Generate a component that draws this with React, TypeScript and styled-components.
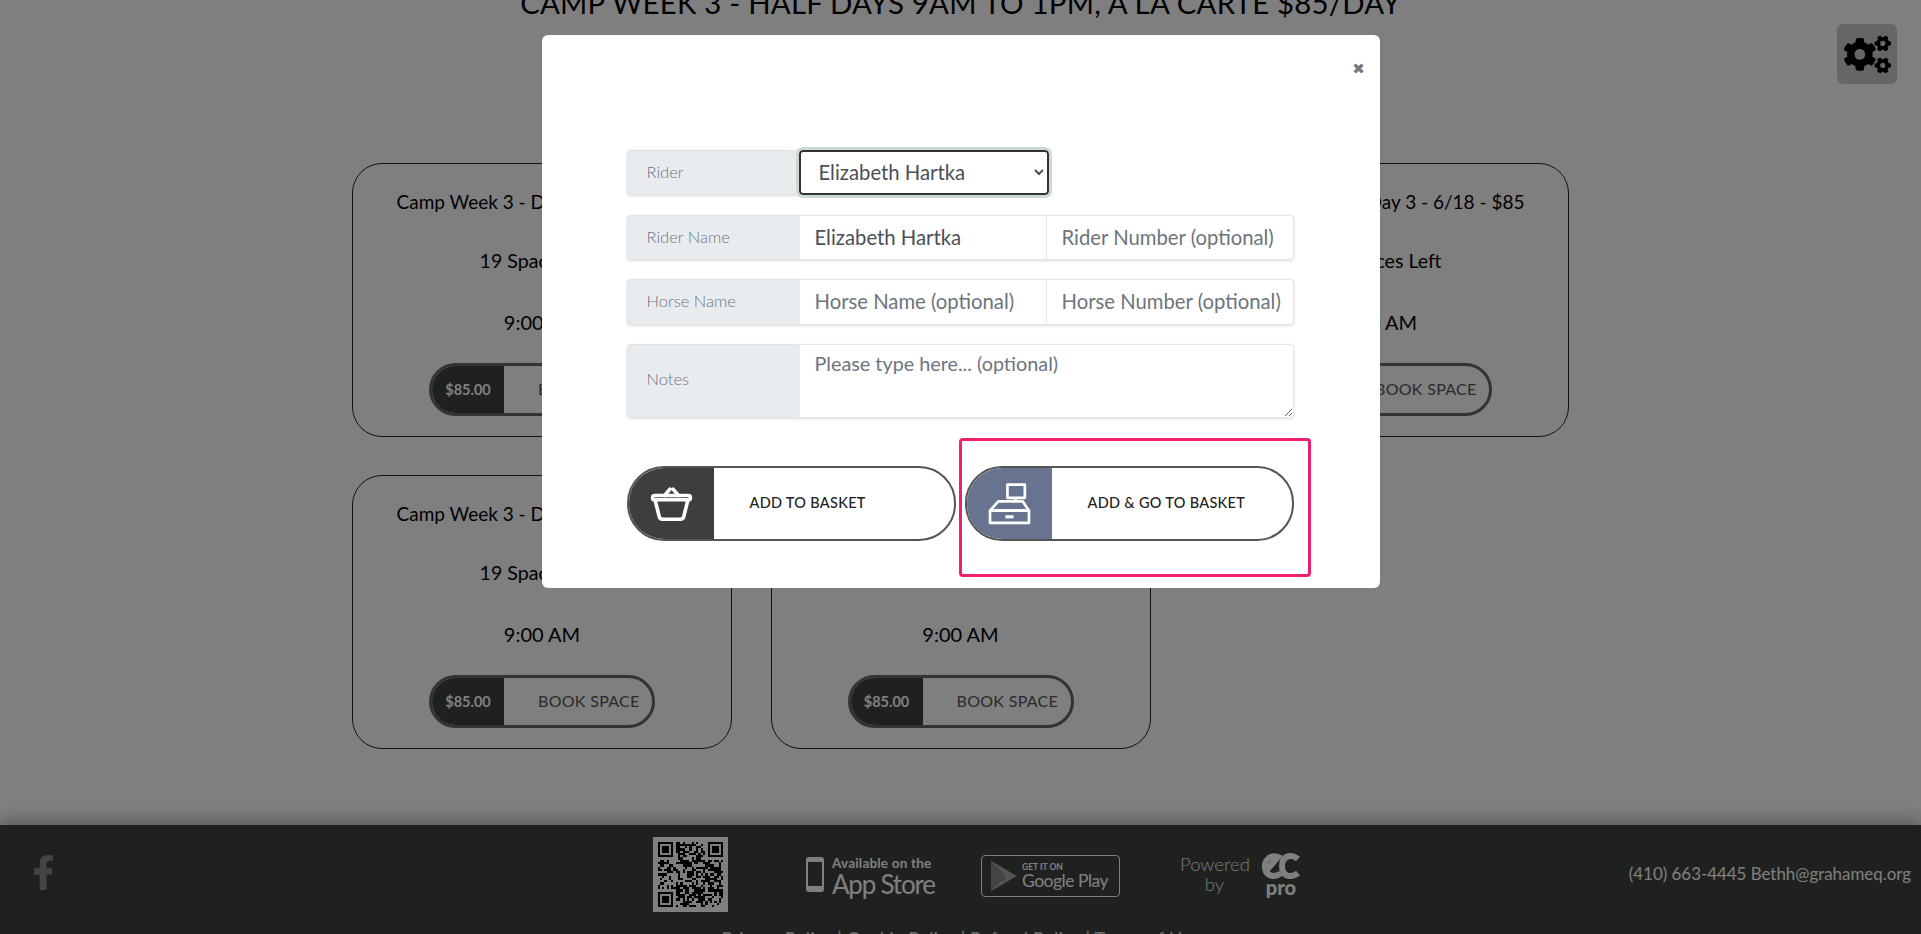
import React, { FC } from 'react'
import styled, { createGlobalStyle } from 'styled-components'
import { FaCogs, FaFacebookF } from 'react-icons/fa'

const GlobalStyle = createGlobalStyle`
  html, body {
    margin: 0;
    padding: 0;
    height: 100%;
    overflow: hidden;
    background: #fff;
    font-family: Lato, "Open Sans", Arial, sans-serif;
  }
  * {
    box-sizing: border-box;
  }
`

const Page = styled.div`
  position: relative;
  height: 934px;
  overflow: hidden;
  display: flex;
  flex-direction: column;
`

const Main = styled.main`
  flex: 1;
`

const Heading = styled.h1`
  margin: -12px 0 0;
  height: 175px;
  font-size: 29.4px;
  line-height: 30px;
  font-weight: 400;
  text-align: center;
  color: #000;
  text-transform: uppercase;
  letter-spacing: 0.2px;
  white-space: nowrap;
`

const CardGrid = styled.div`
  display: grid;
  grid-template-columns: repeat(3, 380px);
  gap: 38px 38.5px;
  justify-content: center;
`

const Card = styled.section`
  height: 274px;
  padding-top: 26px;
  border: 1px solid #222;
  border-radius: 30px;
  display: flex;
  flex-direction: column;
  align-items: center;
  color: #000;
`

const CardLine = styled.div<{ $gap: number; $size: number }>`
  margin-top: ${({ $gap }) => $gap}px;
  font-size: ${({ $size }) => $size}px;
  line-height: 24px;
`

const Pill = styled.div`
  margin-top: 29px;
  width: 226px;
  height: 53px;
  display: flex;
  border: 3px solid #666;
  border-radius: 27px;
  overflow: hidden;
`

const PillPrice = styled.div`
  width: 72px;
  padding-bottom: 1px;
  background: #3f4240;
  color: #fff;
  font-size: 14.5px;
  font-weight: 700;
  display: flex;
  align-items: center;
  justify-content: center;
`

const PillAction = styled.div`
  flex: 1;
  padding: 0 0 2px 34px;
  color: #555;
  font-size: 16px;
  letter-spacing: 0.3px;
  display: flex;
  align-items: center;
  white-space: nowrap;
`

const GearButton = styled.div`
  position: absolute;
  top: 24px;
  right: 24px;
  width: 60px;
  height: 60px;
  border-radius: 6px;
  background: #ccc;
  color: #000;
  display: flex;
  align-items: center;
  justify-content: center;
  font-size: 47px;
`

const Footer = styled.footer`
  flex: none;
  height: 109px;
  background: #3f4240;
  box-shadow: 0 -5px 16px rgba(0, 0, 0, 0.3);
  color: #fff;
`

const FooterRow = styled.div`
  height: 100px;
  display: grid;
  grid-template-columns: 653px auto 1fr;
  align-items: start;
`

const Social = styled.div`
  padding: 30px 0 0 26px;
  font-size: 35px;
  color: #888;
  line-height: 0;
`

const FooterBadges = styled.div`
  display: flex;
  align-items: flex-start;
  padding-top: 12px;
`

const QrBox = styled.svg`
  display: block;
  width: 75px;
  height: 75px;
`

const AppStore = styled.div`
  margin: 20px 0 0 78px;
  width: 128px;
  display: flex;
  gap: 8px;
`

const PhoneBox = styled.div`
  flex: none;
  line-height: 0;
`

const StoreText = styled.div`
  color: #fff;
  line-height: 1;
  white-space: nowrap;
`

const AppSmall = styled.div`
  font-size: 13.5px;
  font-weight: 700;
  letter-spacing: 0.2px;
`

const AppLarge = styled.div`
  font-size: 26px;
  letter-spacing: -1.2px;
`

const PlayBadge = styled.div`
  margin: 18px 0 0 47px;
  width: 139px;
  height: 42px;
  border: 1px solid #fff;
  border-radius: 4px;
  display: flex;
  align-items: center;
  gap: 4px;
  padding-left: 8px;
`

const PlaySmall = styled.div`
  font-size: 8.5px;
  font-weight: 700;
`

const PlayLarge = styled.div`
  font-size: 17.5px;
  margin-top: 1px;
  letter-spacing: -0.5px;
`

const Powered = styled.div`
  margin: 15px 0 0 60px;
  display: flex;
  align-items: center;
  gap: 12px;
`

const PoweredText = styled.div`
  width: 69px;
  text-align: center;
  font-size: 18.5px;
  line-height: 20px;
  font-weight: 300;
  color: #eee;
`

const EcLogo = styled.div`
  display: flex;
  flex-direction: column;
  align-items: center;
  width: 40px;
  color: #fff;
`

const ProText = styled.div`
  font-size: 20px;
  line-height: 15px;
  font-weight: 900;
`

const Contact = styled.div`
  padding: 38px 10px 0 0;
  text-align: right;
  font-size: 16.9px;
  line-height: 22px;
  white-space: nowrap;
`

const FooterLinks = styled.div`
  text-align: center;
  font-size: 18.5px;
  line-height: 18px;
  color: #ddd;
  margin-top: 5px;
`

const Overlay = styled.div`
  position: absolute;
  inset: 0;
  background: rgba(0, 0, 0, 0.5);
`

const Modal = styled.div`
  position: relative;
  width: 838px;
  height: 553px;
  margin: 35px auto 0;
  padding: 115px 86px 0 85px;
  background: #fff;
  border-radius: 6px;
`

const CloseMark = styled.span`
  position: absolute;
  top: 24px;
  right: 11px;
  width: 20px;
  text-align: center;
  font-family: "DejaVu Sans", sans-serif;
  font-size: 15px;
  line-height: 20px;
  color: #777;
`

const Form = styled.form`
  display: flex;
  flex-direction: column;
`

const InputGroup = styled.div<{ $height: number; $gap: number; $width?: number }>`
  display: flex;
  height: ${({ $height }) => $height}px;
  margin-bottom: ${({ $gap }) => $gap}px;
  width: ${({ $width }) => ($width ? `${$width}px` : '100%')};
  border-radius: 4px;
  box-shadow: 0 1px 3px rgba(0, 0, 0, 0.14);
`

const GroupLabel = styled.label<{ $lift?: number }>`
  flex: none;
  width: 172px;
  padding: 0 0 ${({ $lift }) => $lift ?? 2}px 19px;
  display: flex;
  align-items: center;
  background: #e9ecef;
  border: 1px solid #dfe3e6;
  border-right: none;
  border-radius: 4px 0 0 4px;
  color: #6c757d;
  font-size: 16.5px;
  font-weight: 300;
`

const TextInput = styled.input<{ $last?: boolean }>`
  flex: 1;
  min-width: 0;
  height: 100%;
  padding: 0 0 2px 15px;
  border: 1px solid #e4e6e8;
  border-left: ${({ $last }) => ($last ? 'none' : '1px solid #e4e6e8')};
  border-radius: ${({ $last }) => ($last ? '0 4px 4px 0' : '0')};
  outline: none;
  background: #fff;
  color: #495057;
  font-family: inherit;
  font-size: 20.3px;

  &::placeholder {
    color: #6c757d;
    opacity: 1;
  }
`

const RiderSelect = styled.select`
  flex: 1;
  height: 100%;
  padding: 0 0 2px 14px;
  border: 2px solid #333;
  border-radius: 4px;
  outline: 3px solid #ccdad4;
  background: #fff;
  color: #495057;
  font-family: inherit;
  font-size: 20.3px;
`

const NotesInput = styled.textarea`
  flex: 1;
  padding: 6px 15px;
  border: 1px solid #e4e6e8;
  border-radius: 0 4px 4px 0;
  outline: none;
  color: #495057;
  font-family: inherit;
  font-size: 19.8px;

  &::placeholder {
    color: #6c757d;
    opacity: 1;
  }
`

const ActionRow = styled.div`
  display: flex;
  gap: 9px;
  margin-top: 29px;
`

const BasketButton = styled.button`
  width: 329px;
  height: 75px;
  padding: 0;
  display: flex;
  background: #fff;
  border: 2px solid #555;
  border-radius: 37px;
  overflow: hidden;
  cursor: pointer;
  font-family: inherit;
`

const ButtonIcon = styled.span<{ $slate?: boolean }>`
  flex: none;
  width: 85px;
  height: 100%;
  display: flex;
  align-items: center;
  justify-content: center;
  background: ${({ $slate }) => ($slate ? '#68748f' : '#3d3f3e')};
`

const ButtonLabel = styled.span`
  padding: 0 0 3px 36px;
  align-self: center;
  color: #222;
  font-size: 14.5px;
  font-weight: 500;
  letter-spacing: 0.3px;
  white-space: nowrap;
`

const Highlight = styled.div`
  position: absolute;
  left: 417px;
  top: 403px;
  width: 352px;
  height: 139px;
  border: 3px solid #f01f6d;
  border-radius: 4px;
  pointer-events: none;
`

const BasketIcon: FC = () => (
  <svg width="43" height="34" viewBox="0 0 39 32" fill="none" stroke="#fff" strokeWidth="3.4" strokeLinejoin="round" strokeLinecap="round">
    <path d="M13 8 L18 2 M26 8 L21 2" />
    <rect x="1.7" y="8" width="35.6" height="4" rx="2" />
    <path d="M4 12 L8 28 Q8.6 30.3 11 30.3 H28 Q30.4 30.3 31 28 L35 12" />
  </svg>
)

const RegisterIcon: FC = () => (
  <svg width="43" height="43" viewBox="0 0 42 40" fill="none" stroke="#fff" strokeWidth="2.6" strokeLinejoin="round">
    <rect x="19" y="1.5" width="17" height="13" />
    <path d="M27 14.5 V18" />
    <path d="M10 18 H34 L40 27 H2 Z" />
    <rect x="2" y="27" width="38" height="12" />
    <rect x="17" y="31.5" width="8" height="3" fill="#fff" stroke="none" />
  </svg>
)

const PhoneIcon: FC = () => (
  <svg width="18" height="35" viewBox="0 0 18 35" fill="#fff">
    <path fillRule="evenodd" d="M3 0 H15 Q18 0 18 3 V32 Q18 35 15 35 H3 Q0 35 0 32 V3 Q0 0 3 0 Z M2 5 V29 H16 V5 Z" />
  </svg>
)

const PlayIcon: FC = () => (
  <svg width="28" height="32" viewBox="0 0 26 30">
    <path d="M1 1 L25 15 L1 29 Z" fill="#aaa" />
    <path d="M1 1 L15 15 L1 29 Z" fill="#888" />
    <path d="M11 19 L13 17 L14 18 L12 20 Z" fill="#f0306d" />
  </svg>
)

const EcMark: FC = () => (
  <svg width="40" height="28" viewBox="0 0 40 28" fill="none" stroke="#fff" strokeWidth="6">
    <path d="M5 19 L17 5 Q12 3 8 6 Q3 10 4 16 Q5 23 12 24 Q17 24 20 21" />
    <path d="M37 7 Q33 3.5 28 4 Q21 6 21 14 Q21 23 28 24 Q33 24.5 37 21" />
  </svg>
)

const QrCode: FC = () => {
  const size = 29
  const cells: React.ReactElement[] = []
  let seed = 7919
  const isFinder = (x: number, y: number) => (x < 8 && y < 8) || (x >= size - 8 && y < 8) || (x < 8 && y >= size - 8)
  for (let y = 0; y < size; y++) {
    for (let x = 0; x < size; x++) {
      seed = (seed * 16807) % 2147483647
      if (!isFinder(x, y) && seed % 100 < 52) {
        cells.push(<rect key={`${x}-${y}`} x={x + 2} y={y + 2} width="1" height="1" />)
      }
    }
  }
  const finder = (x: number, y: number) => (
    <g key={`f${x}-${y}`}>
      <path fillRule="evenodd" d={`M${x + 2} ${y + 2} h7 v7 h-7 Z M${x + 3} ${y + 3} v5 h5 v-5 Z`} />
      <rect x={x + 4} y={y + 4} width="3" height="3" />
    </g>
  )
  return (
    <QrBox viewBox="0 0 33 33" shapeRendering="crispEdges">
      <rect width="33" height="33" fill="#fff" />
      <g fill="#000">
        {cells}
        {finder(0, 0)}
        {finder(size - 7, 0)}
        {finder(0, size - 7)}
      </g>
    </QrBox>
  )
}

const camps = [
  { day: 'Day 1 - 6/16' },
  { day: 'Day 2 - 6/17' },
  { day: 'Day 3 - 6/18' },
  { day: 'Day 4 - 6/19' },
  { day: 'Day 5 - 6/20' },
]

const App: FC = () => (
  <Page>
    <GlobalStyle />
    <Main>
      <Heading>Camp Week 3 - Half Days 9AM to 1PM, A La Carte $85/Day</Heading>
      <CardGrid>
        {camps.map(({ day }) => (
          <Card key={day}>
            <CardLine $gap={0} $size={19}>
              Camp Week 3 - {day} - $85
            </CardLine>
            <CardLine $gap={35} $size={19.6}>
              19 Spaces Left
            </CardLine>
            <CardLine $gap={37} $size={20}>
              9:00 AM
            </CardLine>
            <Pill>
              <PillPrice>$85.00</PillPrice>
              <PillAction>BOOK SPACE</PillAction>
            </Pill>
          </Card>
        ))}
      </CardGrid>
    </Main>
    <GearButton>
      <FaCogs />
    </GearButton>
    <Footer>
      <FooterRow>
        <Social>
          <FaFacebookF />
        </Social>
        <FooterBadges>
          <QrCode />
          <AppStore>
            <PhoneBox>
              <PhoneIcon />
            </PhoneBox>
            <StoreText>
              <AppSmall>Available on the</AppSmall>
              <AppLarge>App Store</AppLarge>
            </StoreText>
          </AppStore>
          <PlayBadge>
            <PlayIcon />
            <StoreText>
              <PlaySmall>GET IT ON</PlaySmall>
              <PlayLarge>Google Play</PlayLarge>
            </StoreText>
          </PlayBadge>
          <Powered>
            <PoweredText>
              Powered
              <br />
              by
            </PoweredText>
            <EcLogo>
              <EcMark />
              <ProText>pro</ProText>
            </EcLogo>
          </Powered>
        </FooterBadges>
        <Contact>(410) 663-4445 Bethh@grahameq.org</Contact>
      </FooterRow>
      <FooterLinks>Privacy Policy | Cookie Policy | Refund Policy | Terms of Use</FooterLinks>
    </Footer>
    <Overlay>
      <Modal>
        <CloseMark>✖</CloseMark>
        <Form>
          <InputGroup $height={45} $gap={20} $width={422}>
            <GroupLabel>Rider</GroupLabel>
            <RiderSelect defaultValue="Elizabeth Hartka">
              <option>Elizabeth Hartka</option>
            </RiderSelect>
          </InputGroup>
          <InputGroup $height={45} $gap={19}>
            <GroupLabel>Rider Name</GroupLabel>
            <TextInput defaultValue="Elizabeth Hartka" />
            <TextInput $last placeholder="Rider Number (optional)" />
          </InputGroup>
          <InputGroup $height={46} $gap={19}>
            <GroupLabel>Horse Name</GroupLabel>
            <TextInput placeholder="Horse Name (optional)" />
            <TextInput $last placeholder="Horse Number (optional)" />
          </InputGroup>
          <InputGroup $height={74} $gap={19}>
            <GroupLabel $lift={4}>Notes</GroupLabel>
            <NotesInput placeholder="Please type here... (optional)" />
          </InputGroup>
          <ActionRow>
            <BasketButton type="button">
              <ButtonIcon>
                <BasketIcon />
              </ButtonIcon>
              <ButtonLabel>ADD TO BASKET</ButtonLabel>
            </BasketButton>
            <BasketButton type="button">
              <ButtonIcon $slate>
                <RegisterIcon />
              </ButtonIcon>
              <ButtonLabel>ADD &amp; GO TO BASKET</ButtonLabel>
            </BasketButton>
          </ActionRow>
        </Form>
        <Highlight />
      </Modal>
    </Overlay>
  </Page>
)

export default App
